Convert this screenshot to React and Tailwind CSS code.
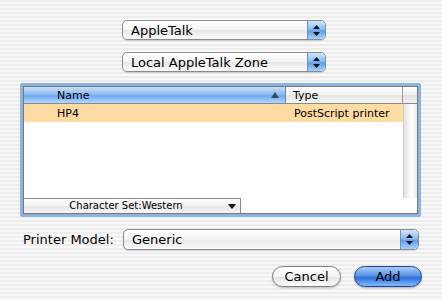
const font = { fontFamily: '"DejaVu Sans", "Liberation Sans", sans-serif' }

function Stepper() {
  // blue aqua up/down arrows box of a popup menu
  return (
    <div className="w-[18px] h-full rounded-r-[5px] border-l border-[#6f8fbf] bg-[linear-gradient(to_bottom,#d2e6fb_0%,#8cbcf2_45%,#5e9ded_55%,#a6d2fb_100%)] flex flex-col items-center justify-center gap-[3px]">
      <svg width="7" height="4" viewBox="0 0 7 4"><path d="M3.5 0L7 4H0z" fill="#111" /></svg>
      <svg width="7" height="4" viewBox="0 0 7 4"><path d="M0 0H7L3.5 4z" fill="#111" /></svg>
    </div>
  )
}

function Popup({ label, className }) {
  return (
    <div className={`flex h-[20px] rounded-[5px] border border-[#8b8b8b] bg-[linear-gradient(to_bottom,#ffffff_0%,#f4f4f4_50%,#e8e8e8_51%,#fafafa_100%)] shadow-[0_1px_1px_rgba(0,0,0,0.15)] ${className}`}>
      <div className="flex-1 flex items-center pl-[8px] text-[13px] text-black leading-none">{label}</div>
      <Stepper />
    </div>
  )
}

function App() {
  return (
    <div
      className="w-[442px] h-[300px] overflow-hidden flex flex-col bg-[repeating-linear-gradient(to_bottom,#ededed_0px,#ededed_2px,#f9f9f9_2px,#f9f9f9_4px)]"
      style={font}
    >
      <Popup label="AppleTalk" className="mt-[20px] ml-[122px] w-[204px]" />
      <Popup label="Local AppleTalk Zone" className="mt-[12px] ml-[122px] w-[204px]" />

      {/* list with focus ring */}
      <div className="mt-[11px] ml-[20px] w-[401px] h-[134px] rounded-[2px] border-[3px] border-[#8db3e2] bg-white flex flex-col">
        <div className="flex-1 flex flex-col border border-[#777]">
          {/* header */}
          <div className="flex h-[16px] text-[11px] leading-none">
            <div className="w-[262px] flex items-center justify-between pl-[33px] pr-[6px] border-r border-[#6d87b0] bg-[linear-gradient(to_bottom,#c7dff8_0%,#8fbdf1_45%,#6eaaf0_55%,#b2d8fc_100%)]">
              <span>Name</span>
              <svg width="8" height="6" viewBox="0 0 8 6"><path d="M4 0L8 6H0z" fill="#3a4a5e" /></svg>
            </div>
            <div className="w-[117px] flex items-center pl-[7px] border-r border-[#999] bg-[linear-gradient(to_bottom,#ffffff_0%,#f1f1f1_50%,#e4e4e4_51%,#f5f5f5_100%)]">
              Type
            </div>
            <div className="flex-1 bg-[linear-gradient(to_bottom,#ffffff_0%,#eeeeee_50%,#e0e0e0_51%,#f0f0f0_100%)]" />
          </div>
          <div className="h-px bg-[#8b8b8b]" />
          {/* rows + scrollbar */}
          <div className="flex-1 flex">
            <div className="flex-1 flex flex-col">
              <div className="flex h-[18px] items-center bg-[#fddba3] text-[11px] leading-none">
                <span className="w-[263px] pl-[33px]">HP4</span>
                <span className="pl-[7px]">PostScript printer</span>
              </div>
            </div>
            <div className="w-[14px] border-l border-[#cfcfcf] bg-[linear-gradient(to_right,#e2e2e2_0%,#f7f7f7_40%,#ffffff_60%,#eaeaea_100%)]" />
          </div>
          {/* bottom bar */}
          <div className="flex h-[15px]">
            <div className="w-[217px] flex items-center border-t border-r border-[#8b8b8b] bg-[linear-gradient(to_bottom,#ffffff_0%,#f2f2f2_50%,#e6e6e6_51%,#f7f7f7_100%)] text-[10px] leading-none">
              <span className="flex-1 text-center">Character Set:Western</span>
              <svg className="mr-[4px]" width="8" height="5" viewBox="0 0 8 5"><path d="M0 0H8L4 5z" fill="#111" /></svg>
            </div>
            <div className="flex-1 bg-white" />
          </div>
        </div>
      </div>

      {/* printer model */}
      <div className="mt-[12px] flex items-center h-[21px]">
        <span className="ml-[23px] w-[100px] text-[13px] leading-none">Printer Model:</span>
        <Popup label="Generic" className="w-[296px] h-[21px]" />
      </div>

      {/* buttons */}
      <div className="mt-[16px] flex h-[21px] text-[13px] leading-none">
        <button className="ml-[272px] w-[69px] h-[21px] rounded-full border border-[#7c7c7c] bg-[linear-gradient(to_bottom,#ffffff_0%,#f3f3f3_50%,#e4e4e4_51%,#fbfbfb_100%)] shadow-[0_1px_2px_rgba(0,0,0,0.25)]" style={font}>
          Cancel
        </button>
        <button className="ml-[13px] w-[68px] h-[21px] rounded-full border border-[#1d3e93] bg-[linear-gradient(to_bottom,#a9cbf8_0%,#5b95e8_45%,#2f6fdc_55%,#7fbdfc_100%)] shadow-[0_1px_2px_rgba(0,0,0,0.3)]" style={font}>
          Add
        </button>
      </div>
    </div>
  )
}

export default App
